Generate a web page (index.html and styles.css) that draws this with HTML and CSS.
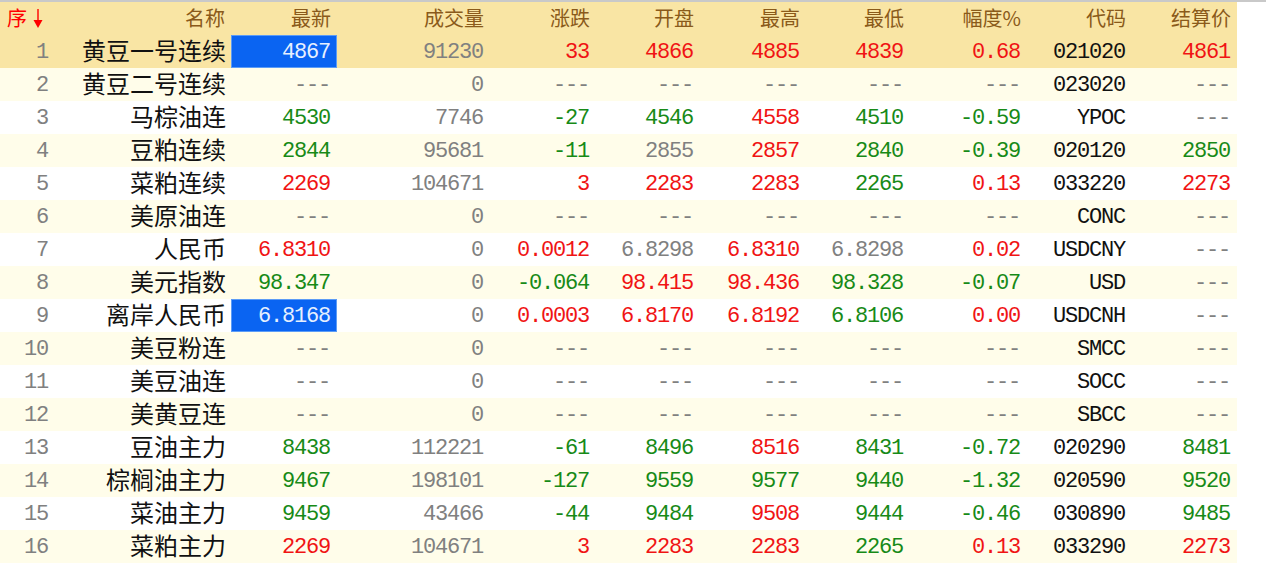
FILE: index.html
```html
<!DOCTYPE html>
<html lang="zh-CN">
<head>
<meta charset="utf-8">
<title>行情</title>
<link rel="stylesheet" href="styles.css">
</head>
<body>
<div class="topline"></div>
<div class="table">
  <div class="row head">
    <div class="c first"><span class="seq">序</span><svg class="arrow" width="10" height="19" viewBox="0 0 10 19"><line x1="5" y1="0" x2="5" y2="13" stroke="#ff0000" stroke-width="1.4"/><polygon points="0.5,11 9.5,11 5,19" fill="#ff0000"/></svg></div>
    <div class="c">名称</div><div class="c">最新</div><div class="c">成交量</div><div class="c">涨跌</div><div class="c">开盘</div><div class="c">最高</div><div class="c">最低</div><div class="c">幅度%</div><div class="c">代码</div><div class="c">结算价</div>
  </div>

  <div class="row sel">
    <div class="c n">1</div><div class="c name">黄豆一号连续</div><div class="c num pick">4867</div><div class="c num g">91230</div><div class="c num r">33</div><div class="c num r">4866</div><div class="c num r">4885</div><div class="c num r">4839</div><div class="c num r">0.68</div><div class="c num k">021020</div><div class="c num r">4861</div>
  </div>
  <div class="row alt">
    <div class="c n">2</div><div class="c name">黄豆二号连续</div><div class="c num g">---</div><div class="c num g">0</div><div class="c num g">---</div><div class="c num g">---</div><div class="c num g">---</div><div class="c num g">---</div><div class="c num g">---</div><div class="c num k">023020</div><div class="c num g">---</div>
  </div>
  <div class="row">
    <div class="c n">3</div><div class="c name">马棕油连</div><div class="c num gr">4530</div><div class="c num g">7746</div><div class="c num gr">-27</div><div class="c num gr">4546</div><div class="c num r">4558</div><div class="c num gr">4510</div><div class="c num gr">-0.59</div><div class="c num k">YPOC</div><div class="c num g">---</div>
  </div>
  <div class="row alt">
    <div class="c n">4</div><div class="c name">豆粕连续</div><div class="c num gr">2844</div><div class="c num g">95681</div><div class="c num gr">-11</div><div class="c num g">2855</div><div class="c num r">2857</div><div class="c num gr">2840</div><div class="c num gr">-0.39</div><div class="c num k">020120</div><div class="c num gr">2850</div>
  </div>
  <div class="row">
    <div class="c n">5</div><div class="c name">菜粕连续</div><div class="c num r">2269</div><div class="c num g">104671</div><div class="c num r">3</div><div class="c num r">2283</div><div class="c num r">2283</div><div class="c num gr">2265</div><div class="c num r">0.13</div><div class="c num k">033220</div><div class="c num r">2273</div>
  </div>
  <div class="row alt">
    <div class="c n">6</div><div class="c name">美原油连</div><div class="c num g">---</div><div class="c num g">0</div><div class="c num g">---</div><div class="c num g">---</div><div class="c num g">---</div><div class="c num g">---</div><div class="c num g">---</div><div class="c num k">CONC</div><div class="c num g">---</div>
  </div>
  <div class="row">
    <div class="c n">7</div><div class="c name">人民币</div><div class="c num r">6.8310</div><div class="c num g">0</div><div class="c num r">0.0012</div><div class="c num g">6.8298</div><div class="c num r">6.8310</div><div class="c num g">6.8298</div><div class="c num r">0.02</div><div class="c num k">USDCNY</div><div class="c num g">---</div>
  </div>
  <div class="row alt">
    <div class="c n">8</div><div class="c name">美元指数</div><div class="c num gr">98.347</div><div class="c num g">0</div><div class="c num gr">-0.064</div><div class="c num r">98.415</div><div class="c num r">98.436</div><div class="c num gr">98.328</div><div class="c num gr">-0.07</div><div class="c num k">USD</div><div class="c num g">---</div>
  </div>
  <div class="row">
    <div class="c n">9</div><div class="c name">离岸人民币</div><div class="c num pick">6.8168</div><div class="c num g">0</div><div class="c num r">0.0003</div><div class="c num r">6.8170</div><div class="c num r">6.8192</div><div class="c num gr">6.8106</div><div class="c num r">0.00</div><div class="c num k">USDCNH</div><div class="c num g">---</div>
  </div>
  <div class="row alt">
    <div class="c n">10</div><div class="c name">美豆粉连</div><div class="c num g">---</div><div class="c num g">0</div><div class="c num g">---</div><div class="c num g">---</div><div class="c num g">---</div><div class="c num g">---</div><div class="c num g">---</div><div class="c num k">SMCC</div><div class="c num g">---</div>
  </div>
  <div class="row">
    <div class="c n">11</div><div class="c name">美豆油连</div><div class="c num g">---</div><div class="c num g">0</div><div class="c num g">---</div><div class="c num g">---</div><div class="c num g">---</div><div class="c num g">---</div><div class="c num g">---</div><div class="c num k">SOCC</div><div class="c num g">---</div>
  </div>
  <div class="row alt">
    <div class="c n">12</div><div class="c name">美黄豆连</div><div class="c num g">---</div><div class="c num g">0</div><div class="c num g">---</div><div class="c num g">---</div><div class="c num g">---</div><div class="c num g">---</div><div class="c num g">---</div><div class="c num k">SBCC</div><div class="c num g">---</div>
  </div>
  <div class="row">
    <div class="c n">13</div><div class="c name">豆油主力</div><div class="c num gr">8438</div><div class="c num g">112221</div><div class="c num gr">-61</div><div class="c num gr">8496</div><div class="c num r">8516</div><div class="c num gr">8431</div><div class="c num gr">-0.72</div><div class="c num k">020290</div><div class="c num gr">8481</div>
  </div>
  <div class="row alt">
    <div class="c n">14</div><div class="c name">棕榈油主力</div><div class="c num gr">9467</div><div class="c num g">198101</div><div class="c num gr">-127</div><div class="c num gr">9559</div><div class="c num gr">9577</div><div class="c num gr">9440</div><div class="c num gr">-1.32</div><div class="c num k">020590</div><div class="c num gr">9520</div>
  </div>
  <div class="row">
    <div class="c n">15</div><div class="c name">菜油主力</div><div class="c num gr">9459</div><div class="c num g">43466</div><div class="c num gr">-44</div><div class="c num gr">9484</div><div class="c num r">9508</div><div class="c num gr">9444</div><div class="c num gr">-0.46</div><div class="c num k">030890</div><div class="c num gr">9485</div>
  </div>
  <div class="row alt">
    <div class="c n">16</div><div class="c name">菜粕主力</div><div class="c num r">2269</div><div class="c num g">104671</div><div class="c num r">3</div><div class="c num r">2283</div><div class="c num r">2283</div><div class="c num gr">2265</div><div class="c num r">0.13</div><div class="c num k">033290</div><div class="c num r">2273</div>
  </div>
</div>
</body>
</html>
```

FILE: styles.css
```css
html, body {
  margin: 0;
  padding: 0;
  background: #ffffff;
}

.topline {
  height: 2px;
  background: #c9c9c9;
}

.table {
  width: 1237px;
}

.row {
  display: grid;
  grid-template-columns: 55px 176px 106px 153px 106px 104px 106px 104px 117px 105px 105px;
  height: 33px;
  background: #ffffff;
}

.row.alt {
  background: #fffdea;
}

.row.sel,
.row.head {
  background: #f9e5a4;
}

.c {
  display: flex;
  align-items: center;
  justify-content: flex-end;
  padding-right: 6px;
  white-space: nowrap;
  line-height: 1;
}

.head .c {
  font-family: "Noto Sans CJK SC", "Noto Sans", sans-serif;
  font-size: 20px;
  color: #8a5a1a;
  padding-bottom: 1px;
}

.head .c.first {
  justify-content: flex-start;
  padding-left: 7px;
  padding-right: 0;
  color: #ff0000;
}

.seq {
  margin-right: 6px;
}

.arrow {
  display: block;
  margin-top: 1px;
}

.name {
  font-family: "Noto Sans CJK SC", "Noto Sans", sans-serif;
  font-size: 24px;
  color: #111111;
  padding-right: 5px;
  padding-bottom: 3px;
}

.num,
.n {
  font-family: "Liberation Mono", "DejaVu Sans Mono", monospace;
  font-size: 22px;
  letter-spacing: -1.2px;
  padding-top: 3px;
}

.num {
  padding-right: 7px;
}

.n {
  color: #808080;
  padding-right: 7px;
}

.r { color: #f01414; }
.gr { color: #178a17; }
.g { color: #808080; }
.k { color: #111111; }

.pick {
  background: #0a64f2;
  box-shadow: inset 0 0 0 1px #5c9cf6;
  color: #e6f0ff;
}
```
